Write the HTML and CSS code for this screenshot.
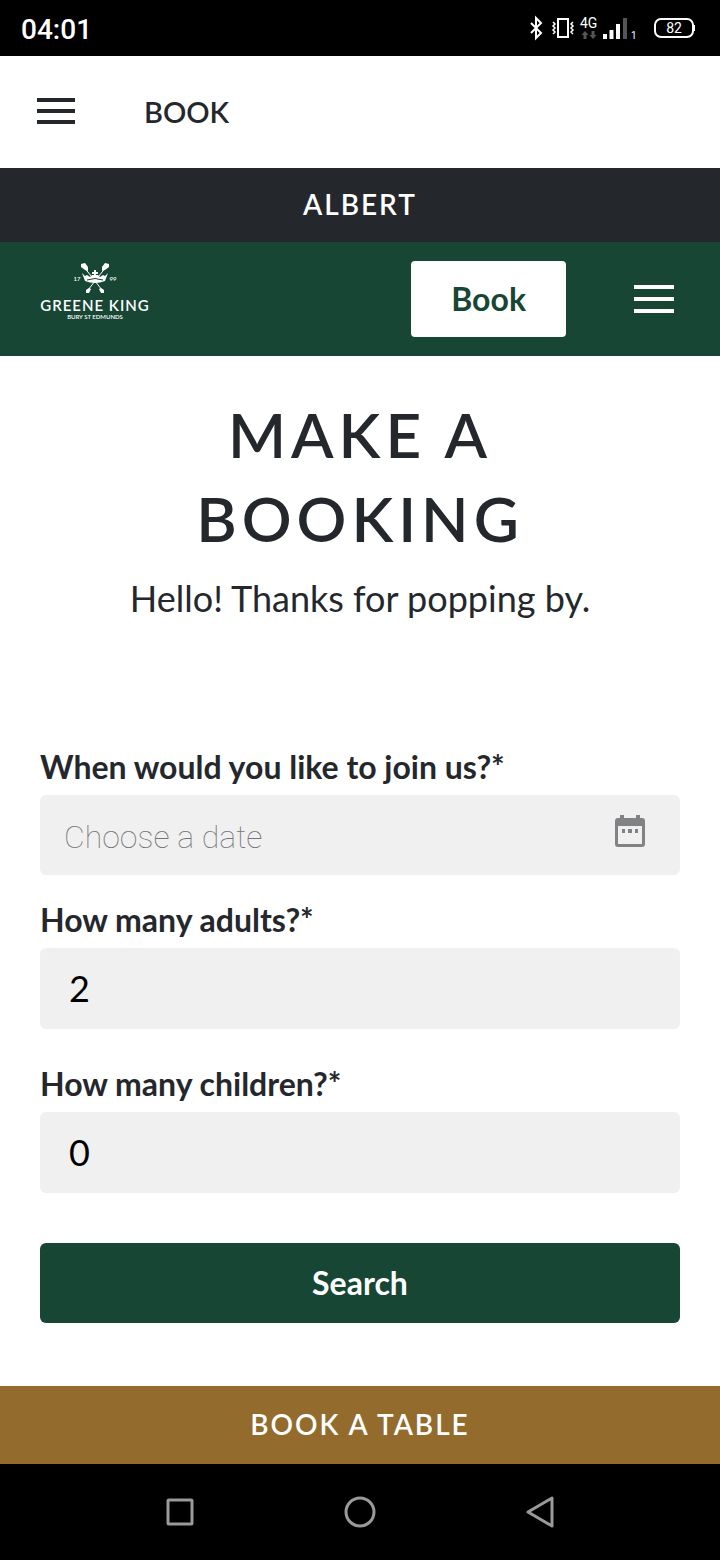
FILE: index.html
```
<!DOCTYPE html>
<html lang="en">
<head>
    <meta charset="UTF-8">
    <meta name="viewport" content="width=device-width, initial-scale=1.0">
    <title>Book | Greene King</title>
    <link rel="stylesheet" href="styles.css">
</head>
<body>
    <div class="status-bar">
        <span class="clock">04:01</span>
        <div class="status-icons">
            <svg width="114" height="32" viewBox="0 0 114 32">
                <!-- bluetooth -->
                <path d="M6 11l10 10-5 5V6l5 5L6 21" fill="none" stroke="#fff" stroke-width="2"/>
                <!-- vibrate -->
                <rect x="33" y="7" width="10" height="18" fill="none" stroke="#fff" stroke-width="2"/>
                <path d="M28 10l2 2-2 2 2 2-2 2 2 2-2 2M48 10l-2 2 2 2-2 2 2 2-2 2 2 2" fill="none" stroke="#fff" stroke-width="1.5"/>
                <!-- mobile data -->
                <text x="55" y="16" class="net-label">4G</text>
                <path d="M60 19l3.500 4h-2v4h-3v-4h-2zM68 27l3.500-4h-2v-4h-3v4h-2z" fill="#555"/>
                <path d="M80 27v-5M86.500 27V18M93 27V12" stroke="#fff" stroke-width="4"/>
                <path d="M100 27V6" stroke="#555" stroke-width="4"/>
                <text x="106" y="27" class="sim-label">1</text>
            </svg>
            <svg width="43" height="22" viewBox="0 0 43 22">
                <rect x="2" y="2" width="38" height="18" rx="6" fill="none" stroke="#fff" stroke-width="2"/>
                <path d="M41 8v6" stroke="#fff" stroke-width="2"/>
                <text x="21" y="16" text-anchor="middle" class="battery-label">82</text>
            </svg>
        </div>
    </div>

    <div class="app-bar">
        <button type="button" class="icon-btn" aria-label="Open menu">
            <svg width="38" height="28" viewBox="0 0 38 28">
                <path d="M0 2h38M0 13h38M0 24h38" stroke="#24282d" stroke-width="4"/>
            </svg>
        </button>
        <span class="app-title">BOOK</span>
    </div>

    <div class="venue">ALBERT</div>

    <header class="site-header">
        <a href="#" class="logo" aria-label="Greene King">
            <svg width="110" height="76" viewBox="0 0 110 76">
                <!-- crossed arrows -->
                <path d="M44 6l18 23M66 6L48 29" stroke="#fff" stroke-width="1"/>
                <path d="M41 3l4-1 3 4v4l-3-1-4-3zM69 3l-4-1-3 4v4l3-1 4-3z" fill="#fff"/>
                <path d="M46 32v-3l3-2 2 1-2 4zM64 32v-3l-3-2-2 1 2 4z" fill="#fff"/>
                <!-- crown -->
                <path d="M55 9v7M52 12h6" stroke="#fff" stroke-width="2"/>
                <path d="M42 12l3 3 2-1 3 2 2-2h6l2 2 3-2 2 1 3-3-3 8q-10 4-20 0z" fill="#fff"/>
                <path d="M47 19q8-3 16 0" fill="none" stroke="#174634" stroke-width="1"/>
                <text x="37" y="20" text-anchor="middle" class="logo-small">17</text>
                <text x="73" y="20" text-anchor="middle" class="logo-small">99</text>
                <text x="55" y="50" text-anchor="middle" class="logo-name">GREENE KING</text>
                <text x="55" y="58" text-anchor="middle" class="logo-small">BURY ST EDMUNDS</text>
            </svg>
        </a>
        <div class="header-actions">
            <button type="button" class="book-btn">Book</button>
            <button type="button" class="icon-btn" aria-label="Site menu">
                <svg width="40" height="30" viewBox="0 0 40 30">
                    <path d="M0 3h40M0 15h40M0 27h40" stroke="#fff" stroke-width="4"/>
                </svg>
            </button>
        </div>
    </header>

    <main class="content">
        <h1>MAKE A BOOKING</h1>
        <p class="intro">Hello! Thanks for popping by.</p>

        <form class="booking-form">
            <div class="field">
                <label for="date">When would you like to join us?*</label>
                <div class="date-box">
                    <input type="text" id="date" name="date" placeholder="Choose a date">
                    <svg width="30" height="34" viewBox="0 0 30 34">
                        <path d="M3 4h2V1h4v3h12V1h4v3h2q3 0 3 3v23q0 3-3 3H3q-3 0-3-3V7q0-3 3-3zM3 12v18h24V12z" fill="#808284" fill-rule="evenodd"/>
                        <path d="M7 15h3v4H7zM13 15h4v4h-4zM20 15h3v4h-3z" fill="#808284"/>
                    </svg>
                </div>
            </div>
            <div class="field">
                <label for="adults">How many adults?*</label>
                <select id="adults" name="adults">
                    <option>1</option>
                    <option selected>2</option>
                    <option>3</option>
                    <option>4</option>
                </select>
            </div>
            <div class="field field-children">
                <label for="children">How many children?*</label>
                <select id="children" name="children">
                    <option selected>0</option>
                    <option>1</option>
                    <option>2</option>
                </select>
            </div>
            <button type="submit" class="search-btn">Search</button>
        </form>
    </main>

    <a href="#" class="book-table">BOOK A TABLE</a>

    <nav class="system-nav">
        <button type="button" class="icon-btn" aria-label="Recent apps">
            <svg width="36" height="36" viewBox="0 0 36 36">
                <rect x="6" y="6" width="24" height="24" rx="1"/>
            </svg>
        </button>
        <button type="button" class="icon-btn" aria-label="Home">
            <svg width="36" height="36" viewBox="0 0 36 36">
                <circle cx="18" cy="18" r="14"/>
            </svg>
        </button>
        <button type="button" class="icon-btn" aria-label="Back">
            <svg width="36" height="36" viewBox="0 0 36 36">
                <path d="M30 4v28L6 18z"/>
            </svg>
        </button>
    </nav>
</body>
</html>
```
FILE: styles.css
```
* {
    box-sizing: border-box;
}
body {
    margin: 0;
    min-height: 100vh;
    display: flex;
    flex-direction: column;
    font-family: Lato, "Open Sans", sans-serif;
    color: #24282d;
    background-color: #fff;
}
button, input, select {
    font-family: inherit;
    border: none;
}
svg {
    display: block;
}
.icon-btn {
    padding: 0;
    background: none;
    cursor: pointer;
}

/* phone status bar */
.status-bar {
    height: 56px;
    padding: 2px 24px 0 21px;
    display: flex;
    align-items: center;
    justify-content: space-between;
    background-color: #000;
    color: #fff;
    font-family: Roboto, sans-serif;
}
.clock {
    font-size: 28px;
    font-weight: 500;
}
.status-icons {
    display: flex;
    align-items: center;
    gap: 14px;
    padding-bottom: 2px;
}
.net-label, .sim-label, .battery-label {
    font-size: 14px;
    fill: #fff;
}
.sim-label {
    font-size: 10px;
}

.app-bar {
    height: 112px;
    padding: 0 37px;
    display: flex;
    align-items: center;
    gap: 69px;
}
.app-title {
    padding-bottom: 2px;
    font-size: 29px;
    font-weight: 600;
}
.venue {
    padding: 17px 18px 19px;
    background-color: #24282d;
    color: #fff;
    font-size: 28px;
    line-height: 38px;
    font-weight: 600;
    letter-spacing: 2px;
    text-align: center;
}

/* site header */
.site-header {
    padding: 19px 46px 19px 40px;
    display: flex;
    align-items: center;
    justify-content: space-between;
    background-color: #174634;
}
.header-actions {
    display: flex;
    align-items: center;
    gap: 68px;
}
.book-btn {
    height: 76px;
    padding: 0 40px 2px;
    border-radius: 4px;
    background-color: #fff;
    color: #174634;
    font-size: 32px;
    font-weight: 700;
    cursor: pointer;
}
.logo-name, .logo-small {
    fill: #fff;
}
.logo-name {
    font-size: 15px;
    font-weight: 600;
    letter-spacing: 1px;
}
.logo-small {
    font-size: 6px;
    font-weight: 600;
}

.content {
    flex-grow: 1;
    padding: 36px 40px 63px;
}
h1 {
    max-width: 400px;
    margin: 0 auto 11px;
    font-size: 62px;
    line-height: 84px;
    font-weight: 600;
    letter-spacing: 5px;
    text-align: center;
}
.intro {
    margin: 0 0 122px;
    font-size: 36px;
    line-height: 54px;
    text-align: center;
}

/* booking form */
.booking-form {
    display: flex;
    flex-direction: column;
}
.field {
    margin-bottom: 25px;
}
.field + .field {
    margin-bottom: 35px;
}
.field.field-children {
    margin-bottom: 50px;
}
label {
    display: block;
    margin-bottom: 8px;
    font-size: 32px;
    line-height: 40px;
    font-weight: 700;
}
.date-box {
    display: flex;
    align-items: center;
    height: 80px;
    padding: 0 35px 8px 24px;
    border-radius: 6px;
    background-color: #f0f0f0;
}
.date-box input {
    flex-grow: 1;
    min-width: 0;
    height: 72px;
    padding: 12px 0 0;
    background: none;
    font-family: Roboto, sans-serif;
    font-size: 32px;
    font-weight: 100;
}
.date-box input::placeholder {
    color: #757575;
}
select {
    display: block;
    width: 100%;
    height: 81px;
    padding: 0 29px 2px;
    border-radius: 6px;
    background-color: #f0f0f0;
    color: #000;
    font-size: 36px;
    -webkit-appearance: none;
    appearance: none;
}
.search-btn {
    height: 80px;
    padding-bottom: 3px;
    border-radius: 6px;
    background-color: #174634;
    color: #fff;
    font-size: 32px;
    font-weight: 700;
    cursor: pointer;
}

.book-table {
    padding: 19px 20px 21px;
    background-color: #936b2d;
    color: #fff;
    font-size: 28px;
    line-height: 38px;
    font-weight: 600;
    letter-spacing: 2px;
    text-align: center;
    text-decoration: none;
}
.system-nav {
    height: 96px;
    display: flex;
    align-items: center;
    justify-content: center;
    gap: 144px;
    background-color: #000;
}
.system-nav svg {
    fill: none;
    stroke: #9a9a9a;
    stroke-width: 3;
    stroke-linejoin: round;
}
```
